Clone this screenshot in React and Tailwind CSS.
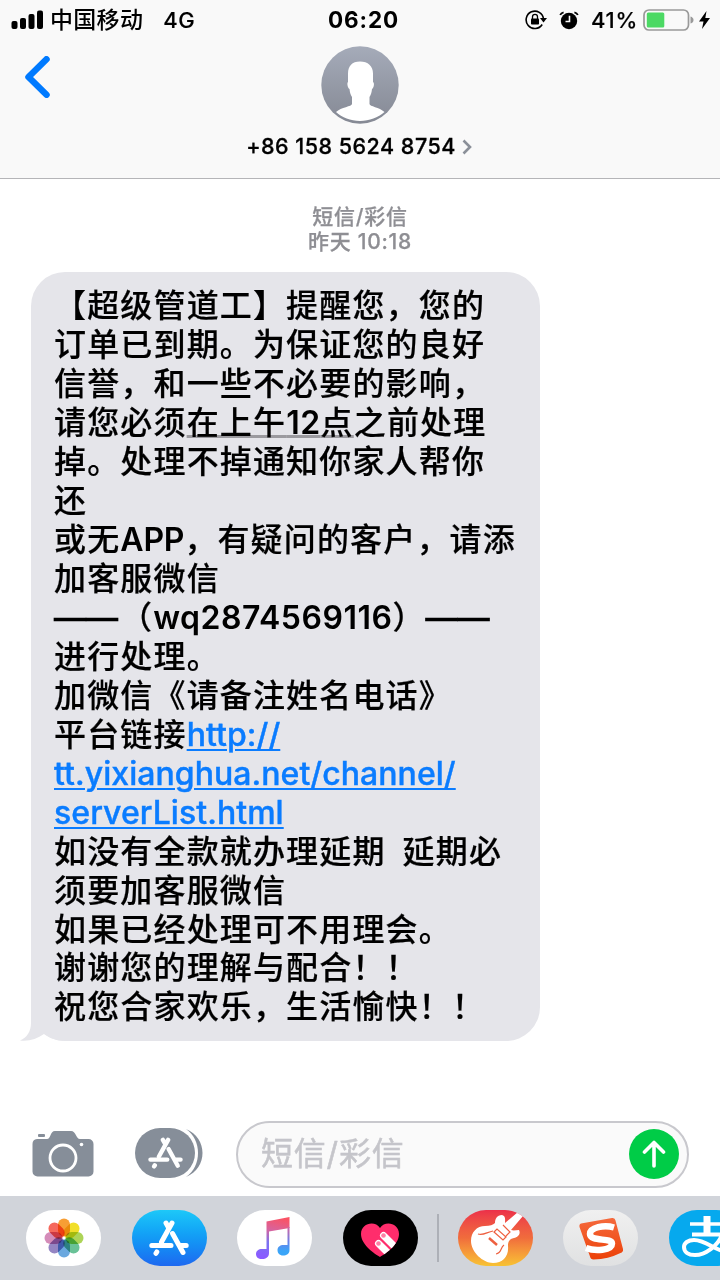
import React from 'react';

// Each line of the message is a list of runs: plain strings are CJK text,
// objects are latin runs or highlighted text.
const LINES = [
  ['【超级管道工】提醒您，您的'],
  ['订单已到期。为保证您的良好'],
  ['信誉，和一些不必要的影响，'],
  ['请您必须', { kind: 'date', before: '在上午', latin: '12', after: '点' }, '之前处理'],
  ['掉。处理不掉通知你家人帮你'],
  ['还'],
  ['或无', { kind: 'latin', text: 'APP' }, '，有疑问的客户，请添'],
  ['加客服微信'],
  [{ kind: 'dash' }, '（', { kind: 'account', text: 'wq2874569116' }, '）', { kind: 'dash' }],
  ['进行处理。'],
  ['加微信《请备注姓名电话》'],
  ['平台链接', { kind: 'link', text: 'http://' }],
  [{ kind: 'link', text: 'tt.yixianghua.net/channel/' }],
  [{ kind: 'link', text: 'serverList.html' }],
  ['如没有全款就办理延期', { kind: 'gap' }, '延期必'],
  ['须要加客服微信'],
  ['如果已经处理可不用理会。'],
  ['谢谢您的理解与配合！！'],
  ['祝您合家欢乐，生活愉快！！'],
];

const PETALS = ['#f7941e', '#f0dc12', '#a4d044', '#58bb8c', '#5a9fdc', '#8878bd', '#d080b2', '#f4574a'];

function Run({ run }) {
  if (typeof run === 'string') return <span>{run}</span>;
  if (run.kind === 'gap') return <span className="inline-block w-[17px]" />;
  if (run.kind === 'dash') return <span className="tracking-normal mr-0.5 [-webkit-text-stroke:0.7px]">——</span>;
  if (run.kind === 'date') {
    return (
      <span className="underline decoration-[#9b9a9f] decoration-[2.5px] underline-offset-1 [text-decoration-skip-ink:none]">
        {run.before}
        <span className="font-semibold tracking-[0.5px] [-webkit-text-stroke:0]">{run.latin}</span>
        {run.after}
      </span>
    );
  }
  if (run.kind === 'link') {
    return (
      <a className="text-[#0a7cff] underline decoration-2 underline-offset-[3px] tracking-[0.050px] [-webkit-text-stroke:0.4px]">
        {run.text}
      </a>
    );
  }
  if (run.kind === 'account') {
    return <span className="font-semibold tracking-[0.500px] [-webkit-text-stroke:0]">{run.text}</span>;
  }
  return <span className="font-semibold tracking-[-0.200px] [-webkit-text-stroke:0]">{run.text}</span>;
}

function StatusBar() {
  return (
    <div className="flex items-center h-10 pl-[11px] pr-[10px] text-black">
      <div className="flex items-center flex-1">
        <svg className="w-8 h-5" viewBox="0 0 32 20">
          <rect x="0.5" y="11" width="6" height="8" rx="2" />
          <rect x="9" y="8" width="6" height="11" rx="2" />
          <rect x="17.500" y="4" width="6" height="15" rx="2" />
          <rect x="26" y="0.5" width="6" height="18.500" rx="2" />
        </svg>
        <span className="ml-[7px] text-[23px] leading-8 font-medium tracking-[0.300px]">中国移动</span>
        <span className="ml-5 text-[22px] leading-8 font-medium tracking-[0.5px] [-webkit-text-stroke:0.2px]">4G</span>
      </div>
      <span className="ml-1.5 text-[22.500px] leading-8 font-bold tracking-[0.900px]">06:20</span>
      <div className="flex items-center justify-end flex-1">
        <svg className="w-[22px] h-5" viewBox="0 0 22 20" fill="none">
          <path d="M17.200 14.500A8.700 8.700 0 1 1 18.500 9" stroke="black" strokeWidth="1.600" />
          <path d="M15 8h7l-3.500 4.500z" fill="black" />
          <rect x="6" y="8.500" width="8" height="6" rx="0.800" fill="black" />
          <path d="M7.500 9V6.800a2.500 2.500 0 0 1 5 0V9" stroke="black" strokeWidth="1.300" />
        </svg>
        <svg className="w-5 h-[19px] ml-3" viewBox="0 0 20 19" fill="none">
          <circle cx="10" cy="10" r="8.200" fill="black" />
          <path d="M1.200 4Q2 1.900 4.600 1.300M18.800 4Q18 1.900 15.400 1.300" stroke="black" strokeWidth="1.800" />
          <path d="M10.500 4.800V10.500H6.500" stroke="#f9f9f9" strokeWidth="1.600" />
        </svg>
        <span className="ml-3 text-[22px] leading-8 font-medium tracking-[0.700px] [-webkit-text-stroke:0.2px]">41%</span>
        <svg className="w-[51px] h-[22px] ml-[5px]" viewBox="0 0 51 22" fill="none">
          <rect x="1" y="1" width="44.500" height="20" rx="5" stroke="#999" strokeWidth="1.700" />
          <rect x="3.800" y="3.500" width="17.500" height="15" rx="1.500" fill="#4cd964" />
          <path d="M47.500 7.500q3 1 3 3.500t-3 3.500z" fill="#999" />
        </svg>
        <svg className="w-[11px] h-[18px] ml-[5px]" viewBox="0 0 11 18">
          <path d="M7.500 0L0 10.500h4.500L3 18l8-11H6.300z" />
        </svg>
      </div>
    </div>
  );
}

function Header() {
  return (
    <header className="h-[179px] bg-[#f9f9f9] border-b border-[#b5b5b8] shrink-0">
      <StatusBar />
      <div className="grid grid-cols-[1fr_78px_1fr] pt-1.5 -ml-px">
        <svg className="w-[26px] h-[42px] ml-[25px] mt-[10px]" viewBox="0 0 26 42" fill="none">
          <path d="M22.500 3.300L4.500 21l18 17.700" stroke="#007aff" strokeWidth="6.500" strokeLinecap="round" strokeLinejoin="round" />
        </svg>
        <svg className="w-[78px] h-[78px]" viewBox="0 0 78 78">
          <defs>
            <linearGradient id="avatar" x2="0" y2="1">
              <stop stopColor="#a5abb9" />
              <stop offset="1" stopColor="#858994" />
            </linearGradient>
          </defs>
          <circle cx="39" cy="39" r="38.700" fill="url(#avatar)" />
          <path
            d="M39 15.500c8 0 13 4.500 13 12v8.500c1.700.5 1 6-1 7-.3 3.500-1.300 6.500-2.500 8V58c0 2.500 10 3.200 15 8C57 71.500 48.500 75 39 75S21 71.500 15 66c5-4.800 16-5.500 16-8v-7c-1.200-1.500-2.200-4.500-2.500-8-2-1-2.700-6.500-1.500-7v-8.500c0-7.500 4-12 12-12z"
            fill="white"
          />
        </svg>
      </div>
      <div className="flex items-center justify-center h-11 -ml-0.5 text-black">
        <span className="text-[21.500px] leading-7 font-medium tracking-[0.500px] [-webkit-text-stroke:0.3px]">
          +86 158 5624 8754
        </span>
        <svg className="w-[10px] h-4 ml-1.5 mt-0.5" viewBox="0 0 10 16" fill="none">
          <path d="M1.500 1.500L8 8l-6.500 6.500" stroke="#8b9099" strokeWidth="2.600" />
        </svg>
      </div>
    </header>
  );
}

function Message() {
  return (
    <div className="relative ml-[31px] mt-[18px] w-[509px] h-[769px] rounded-[34px] bg-[#e5e5ea] pl-[23px] pt-[14px]">
      <svg className="absolute left-[-11px] bottom-0 w-[60px] h-10" viewBox="0 0 60 40" fill="#e5e5ea">
        <path d="M11 0v22c0 8-4 15-11 17.500 9 1 17-1.500 24-6.500 8 6 17 7 25 7h11V0z" />
      </svg>
      <div className="relative text-[32px] leading-[39px] font-medium tracking-[1.160px] text-black [-webkit-text-stroke:0.2px]">
        {LINES.map((runs, i) => (
          <p key={i} className="h-[38.970px] whitespace-nowrap">
            {runs.map((run, j) => (
              <Run key={j} run={run} />
            ))}
          </p>
        ))}
      </div>
    </div>
  );
}

function AppStoreGlyph({ className }) {
  return (
    <svg className={className} viewBox="0 0 40 36" fill="none" stroke="white" strokeWidth="5" strokeLinecap="round">
      <path d="M23 3L12.500 22M17 3l2.500 4.500" />
      <path d="M23.500 13.500l10.500 19" />
      <path d="M2.800 25.500H22M32 25.500h5.200" />
      <path d="M7.800 32l-.8 1.300" />
    </svg>
  );
}

function Composer() {
  return (
    <div className="flex items-center h-[66px] mt-20 pl-8">
      <svg className="w-[62px] h-[47px] -mt-0.5" viewBox="0 0 62 47">
        <path
          d="M5 9h10c4 0 3-8 8-8h16c5 0 5 8 9 8h8.500a5 5 0 0 1 5 5v27.500a5 5 0 0 1-5 5H5.500a5 5 0 0 1-5-5V14a5 5 0 0 1 4.500-5z"
          fill="#868e99"
        />
        <rect x="6" y="4" width="7" height="3" rx="1" fill="#868e99" />
        <circle cx="31" cy="28" r="13" fill="none" stroke="white" strokeWidth="2.800" />
        <circle cx="49.500" cy="14.500" r="1.800" fill="white" />
      </svg>
      <div className="flex items-center ml-[41px] -mt-0.5">
        <div className="flex items-center justify-center w-[60px] h-[50px] rounded-[25px] bg-[#868e99]">
          <AppStoreGlyph className="w-[35px] h-8" />
        </div>
        <svg className="w-[18px] h-[50px] -ml-2.5" viewBox="0 0 18 50">
          <path d="M1 1C23 10 23 40 1 49 17 38 17 12 1 1z" fill="#868e99" />
        </svg>
      </div>
      <div className="flex items-center justify-between w-[453px] h-[67px] ml-[33px] pl-[23px] pr-2 rounded-[34px] border-2 border-[#c8c8cd] bg-[#fafafa] shrink-0">
        <span className="text-[32px] leading-10 tracking-[0.800px] text-[#c5c5ca] [-webkit-text-stroke:0.5px]">短信/彩信</span>
        <div className="flex items-center justify-center w-[50px] h-[50px] -mt-px rounded-full bg-[#00cc47]">
          <svg className="w-6 h-7" viewBox="0 0 24 28" fill="none" stroke="white" strokeWidth="3.600" strokeLinecap="round" strokeLinejoin="round">
            <path d="M12 26V2.500M2.500 12L12 2.500 21.500 12" />
          </svg>
        </div>
      </div>
    </div>
  );
}

function AppPill({ className = '', children }) {
  return (
    <div className={`flex items-center justify-center w-[75px] h-14 rounded-[28px] shrink-0 overflow-hidden ${className}`}>
      {children}
    </div>
  );
}

function AppDrawer() {
  return (
    <div className="flex h-[84px] pl-[26px] pt-3.5 gap-[30.500px] bg-[#d1d4da] overflow-hidden shrink-0">
      <AppPill className="bg-white">
        <svg className="w-10 h-10" viewBox="-20 -20 40 40">
          {PETALS.map((color, i) => (
            <rect
              key={color}
              x="-6"
              y="-19.500"
              width="12"
              height="18"
              rx="6"
              fill={color}
              transform={`rotate(${i * 45})`}
              className="mix-blend-multiply opacity-90"
            />
          ))}
        </svg>
      </AppPill>
      <AppPill className="bg-linear-to-b from-[#1ec8f8] to-[#1e68f0]">
        <AppStoreGlyph className="w-10 h-9" />
      </AppPill>
      <AppPill className="bg-white">
        <svg className="w-[34px] h-[42px] -ml-1" viewBox="0 0 34 42">
          <defs>
            <linearGradient id="note" x1="0.700" x2="0.500" y2="1">
              <stop stopColor="#fb5263" />
              <stop offset="0.350" stopColor="#d6649f" />
              <stop offset="0.650" stopColor="#7a73f0" />
              <stop offset="1" stopColor="#8a5cff" />
            </linearGradient>
            <linearGradient id="noteRight" gradientUnits="userSpaceOnUse" x1="0" y1="10" x2="0" y2="34">
              <stop stopColor="#d6649f" />
              <stop offset="0.600" stopColor="#6a80ea" />
              <stop offset="1" stopColor="#3aa5f8" />
            </linearGradient>
          </defs>
          <path d="M10.500 4.500L33.500 0v11L13 14.500V36c0 4-3 6-7 6s-6-2-6-5 2.500-5 6-5h4.500z" fill="url(#note)" />
          <path d="M31.500 10h2v23c0 4-3 5.500-6.500 5.500S21.500 36 21.500 33s2.500-5 6-5h4z" fill="url(#noteRight)" />
        </svg>
      </AppPill>
      <AppPill className="bg-black">
        <svg className="w-10 h-[34px] mt-1" viewBox="0 0 40 34">
          <defs>
            <clipPath id="heart">
              <path d="M20 34C15 31 1 22 1 11 1 0 15-3 20 5c5-8 19-5 19 6 0 11-14 20-19 23z" />
            </clipPath>
          </defs>
          <g clipPath="url(#heart)">
            <rect width="40" height="34" fill="#ff2d6c" />
            <g fill="white">
              <rect x="20" y="9" width="7" height="28" rx="3.500" transform="rotate(-45 23.500 12.500)" />
              <rect x="15" y="17" width="7" height="28" rx="3.500" transform="rotate(-45 18.500 20.500)" />
            </g>
            <circle cx="23.500" cy="12.500" r="2.300" fill="#ff7fa5" />
            <circle cx="18.500" cy="20.500" r="2.300" fill="#ff7fa5" />
          </g>
        </svg>
      </AppPill>
      <div className="w-0.5 h-12 mt-1 -mx-[11.500px] bg-[#adb0b7] shrink-0" />
      <AppPill className="bg-linear-to-b from-[#ec2f49] via-[#f06c3c] to-[#f7c233]">
        <svg className="w-[75px] h-14" viewBox="0 0 75 56">
          <path
            d="M60 2l5 4-12 14c3 1 5 0 8 0 2 4-1 7-5 8-5 1-6 4-6 8 1 10-5 17-15 17S13 42 13 31c0-9 6-15 14-15 5 0 8-1 10-3 0-4 2-8 7-8 4 1 3 5 3 8z"
            fill="white"
          />
          <g fill="none" stroke="#ee6040" strokeWidth="1.200">
            <path d="M20 24c5 2 9-2 15-3M46 35c-4 3-2 8-8 9" />
            <path d="M36 22l9 8 3-3-9-8zM45 15l7 7-4 4" />
          </g>
          <path d="M31 28l8 7" stroke="#ee6040" strokeWidth="2.500" />
        </svg>
      </AppPill>
      <AppPill className="bg-linear-to-b from-[#f0f0f0] to-[#e0e1e2]">
        <svg className="w-[46px] h-[46px]" viewBox="0 0 46 46">
          <defs>
            <linearGradient id="sogou" x2="0" y2="1">
              <stop stopColor="#f56a3d" />
              <stop offset="1" stopColor="#ec4108" />
            </linearGradient>
          </defs>
          <path d="M3 8.500L34 3q3-.5 3.500 2.500L45 34q.5 3-2.500 4-12 6-27 6.500-3 0-3.500-3L1.500 12Q1 9 3 8.500z" fill="url(#sogou)" />
          <path d="M36 12.500C26 9.500 12 12.500 12 19c0 8 22 3.500 22 9.500 0 7-17 8-26 4.500" fill="none" stroke="white" strokeWidth="6.500" />
        </svg>
      </AppPill>
      <AppPill className="bg-[#06a9ee]">
        <svg className="w-[75px] h-14" viewBox="0 0 75 56" fill="none" stroke="white">
          <path d="M38 6v18" strokeWidth="7" />
          <path d="M21 14h37" strokeWidth="3.500" />
          <path d="M23 24.500h30C49 36 36 45 26 45c-7 0-11-3-11-8 0-4 4-7 10-7 12 0 20 10 35 13" strokeWidth="4" />
        </svg>
      </AppPill>
    </div>
  );
}

export default function App() {
  return (
    <div className="flex flex-col w-[720px] h-[1280px] overflow-hidden bg-white font-[Inter,'Noto_Sans_CJK_SC',sans-serif]">
      <Header />
      <main className="flex-1">
        <div className="flex flex-col items-center pt-[25px] text-[21px] leading-[25px] font-medium tracking-[0.700px] text-[#8e8e93] [-webkit-text-stroke:0.25px]">
          <span>短信/彩信</span>
          <span>昨天 10:18</span>
        </div>
        <Message />
        <Composer />
      </main>
      <AppDrawer />
    </div>
  );
}
